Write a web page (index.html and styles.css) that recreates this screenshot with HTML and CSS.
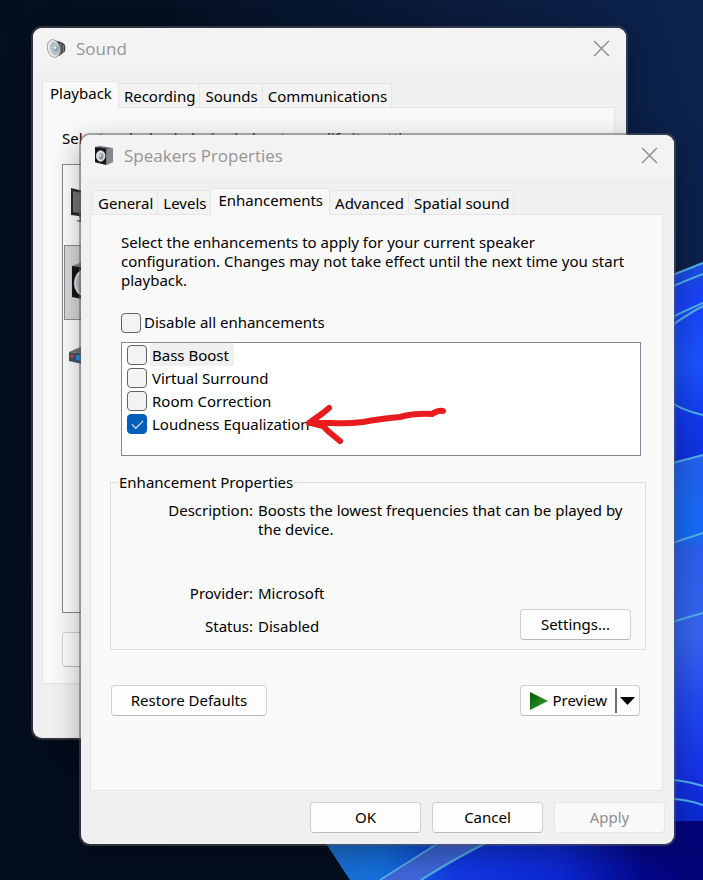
FILE: index.html
```html
<!DOCTYPE html>
<html lang="en">
<head>
  <meta charset="UTF-8" />
  <meta name="viewport" content="width=device-width,initial-scale=1.0"/>
  <title>Speakers Properties</title>
  <link rel="stylesheet" href="styles.css">
</head>
<body>
  <div class="desktop">
    <svg class="wallpaper" viewBox="0 0 703 880" preserveAspectRatio="xMaxYMax slice" aria-hidden="true">
      <defs>
        <linearGradient id="petal" x1="0" y1="264" x2="0" y2="464" gradientUnits="userSpaceOnUse">
          <stop offset="0" stop-color="#1c50dc"/>
          <stop offset="0.15" stop-color="#1840f4"/>
          <stop offset="0.5" stop-color="#1a52fb"/>
          <stop offset="0.8" stop-color="#1038ea"/>
          <stop offset="1" stop-color="#0e30d8"/>
        </linearGradient>
        <linearGradient id="lower" x1="0" y1="460" x2="0" y2="822" gradientUnits="userSpaceOnUse">
          <stop offset="0" stop-color="#2260ee"/>
          <stop offset="0.2" stop-color="#146cf6"/>
          <stop offset="0.25" stop-color="#2c5eea"/>
          <stop offset="0.48" stop-color="#3565ee"/>
          <stop offset="0.7" stop-color="#1e44ee"/>
          <stop offset="0.88" stop-color="#1430e4"/>
          <stop offset="1" stop-color="#0a2ad0"/>
        </linearGradient>
        <linearGradient id="base" x1="325" y1="0" x2="703" y2="0" gradientUnits="userSpaceOnUse">
          <stop offset="0" stop-color="#1f70d4"/>
          <stop offset="0.15" stop-color="#1270dc"/>
          <stop offset="0.35" stop-color="#1238e4"/>
          <stop offset="0.62" stop-color="#0c28d4"/>
          <stop offset="0.85" stop-color="#03078a"/>
          <stop offset="1" stop-color="#020470"/>
        </linearGradient>
      </defs>
      <path d="M660 280 L703 263 V470 H660 Z" fill="url(#petal)"/>
      <path d="M660 466 L703 455 V822 H660 Z" fill="url(#lower)"/>
      <path d="M660 821 H703 V860 H640 Z" fill="#03067c"/>
      <path d="M325 842 H703 V880 H350 Q338 862 325 842 Z" fill="url(#base)"/>
      <path d="M380 880 L440 842 H488 L421 880 Z" fill="#3f66d8"/>
      <g fill="none" stroke="#52b0e8" stroke-width="2">
        <path d="M380 880 L440 842 M421 880 Q452 860 488 842"/>
        <path d="M660 280 L703 263 M660 292 Q685 281 703 274 M660 323 Q685 311 703 303 M660 335 Q680 318 703 306"/>
        <path d="M660 396 Q680 410 703 415 M660 466 Q685 460 703 455 M660 547 Q685 539 703 533"/>
        <path d="M660 626 Q685 618 703 613 M660 779 Q685 780 703 786 M660 798 Q688 799 703 805"/>
      </g>
    </svg>

    <section class="window window-back" aria-label="Sound">
      <header class="titlebar">
        <svg class="app-icon" viewBox="0 0 20 20" aria-hidden="true">
          <path d="M7 1 L14 3 L18 5 Q20 8 19 13 L14 17 L8 19 Z" fill="#444"/>
          <path d="M14 5 Q16 10 14 16 M17 6 Q18 10 17 14" fill="none" stroke="#8a8a8a"/>
          <ellipse cx="7" cy="10" rx="6.5" ry="9.5" fill="#eeeeee" stroke="#8c8c8c" stroke-width="0.8" transform="rotate(-14 7 10)"/>
          <ellipse cx="8" cy="10" rx="4.8" ry="7.5" fill="#b4c0c8" transform="rotate(-14 8 10)"/>
          <ellipse cx="9.5" cy="10" rx="2.5" ry="3" fill="#8fa3b0"/>
          <circle cx="8.5" cy="9" r="1.5" fill="#e8f0f4"/>
        </svg>
        <h2>Sound</h2>
        <button class="close" type="button" aria-label="Close Sound">
          <svg viewBox="0 0 16 16"><path d="M1 1 L15 15 M15 1 L1 15"/></svg>
        </button>
      </header>
      <div class="window-body">
        <div class="tabs" role="tablist">
          <button class="tab active" type="button" role="tab" aria-selected="true">Playback</button>
          <button class="tab" type="button" role="tab">Recording</button>
          <button class="tab" type="button" role="tab">Sounds</button>
          <button class="tab" type="button" role="tab">Communications</button>
        </div>
        <div class="panel playback">
          <p>Select a playback device below to modify its settings:</p>
          <ul class="devices">
            <li>
              <svg viewBox="0 0 48 48" aria-hidden="true">
                <path d="M2 4 L42 14 V36 L2 31 Z" fill="#2b2b2b"/>
                <path d="M4 7 L40 16 V33 L4 28 Z" fill="#747474"/>
                <path d="M10 32 L18 33 V37 H12 Z" fill="#555"/>
                <path d="M7 37 Q14 34 26 37 L22 40 Z" fill="#444"/>
              </svg>
            </li>
            <li class="selected">
              <svg viewBox="0 0 48 48" aria-hidden="true">
                <path d="M2 7 L12 3 L38 6 V10 Z" fill="#85888c"/>
                <path d="M2 7 L32 10 V44 L2 38 Z" fill="#171717"/>
                <ellipse cx="14" cy="24" rx="9" ry="12" fill="#b9bdc0" stroke="#eee" stroke-width="2"/>
              </svg>
            </li>
            <li>
              <svg viewBox="0 0 48 48" aria-hidden="true">
                <path d="M0 18 L16 11 L44 15 L40 22 Z" fill="#6d7880"/>
                <path d="M0 18 L40 22 V36 L0 27 Z" fill="#46535e"/>
                <path d="M7 21 L24 23 V28 L7 26 Z" fill="#2b91e8"/>
                <circle cx="3" cy="22" r="1.5" fill="#e04a3c"/>
              </svg>
            </li>
          </ul>
          <button class="btn" type="button" aria-label="Configure"></button>
        </div>
      </div>
    </section>

    <section class="window window-front" aria-label="Speakers Properties">
      <header class="titlebar">
        <svg class="app-icon" viewBox="0 0 20 20" aria-hidden="true">
          <path d="M0 1 L5 0 L19 2 L13 4 Z" fill="#686a70"/>
          <path d="M12 3 L19 2 V17 L12 20 Z" fill="#858892"/>
          <path d="M0 1 L12 3 V20 L0 17 Z" fill="#161616"/>
          <ellipse cx="6" cy="10.5" rx="4.5" ry="5.5" fill="#d8dcde" stroke="#f4f4f4" stroke-width="0.8"/>
          <ellipse cx="6.5" cy="11" rx="2.5" ry="3.5" fill="#8c9aa4"/>
          <circle cx="5.5" cy="10" r="1" fill="#f4f8fa"/>
        </svg>
        <h2>Speakers Properties</h2>
        <button class="close" type="button" aria-label="Close Speakers Properties">
          <svg viewBox="0 0 16 16"><path d="M1 1 L15 15 M15 1 L1 15"/></svg>
        </button>
      </header>
      <div class="window-body">
        <div class="tabs tabs-inset" role="tablist">
          <button class="tab" type="button" role="tab">General</button>
          <button class="tab" type="button" role="tab">Levels</button>
          <button class="tab active" type="button" role="tab" aria-selected="true">Enhancements</button>
          <button class="tab" type="button" role="tab">Advanced</button>
          <button class="tab" type="button" role="tab">Spatial sound</button>
        </div>
        <div class="panel enhancements">
          <p>Select the enhancements to apply for your current speaker configuration. Changes may not take effect until the next time you start playback.</p>
          <label class="check disable-all"><input type="checkbox"><span>Disable all enhancements</span></label>
          <div class="effects">
            <label class="check focused"><input type="checkbox"><span>Bass Boost</span></label>
            <label class="check"><input type="checkbox"><span>Virtual Surround</span></label>
            <label class="check"><input type="checkbox"><span>Room Correction</span></label>
            <label class="check"><input type="checkbox" checked><span>Loudness Equalization</span></label>
            <svg class="arrow" viewBox="0 0 144 44" aria-hidden="true">
              <path d="M140 10 Q135 9 129 13 Q112 12 97 16 Q76 18 60 21 Q44 23 28 22 L6 22 L20 12 L26 7 M8 22 L20 25 L26 31 L37 40"/>
            </svg>
          </div>
          <fieldset class="properties">
            <legend>Enhancement Properties</legend>
            <dl>
              <dt>Description:</dt>
              <dd class="description">Boosts the lowest frequencies that can be played by the device.</dd>
              <dt>Provider:</dt>
              <dd>Microsoft</dd>
              <dt>Status:</dt>
              <dd>Disabled</dd>
            </dl>
            <button class="btn settings" type="button">Settings...</button>
          </fieldset>
          <div class="actions">
            <button class="btn restore" type="button">Restore Defaults</button>
            <div class="split">
              <button class="preview" type="button">
                <svg viewBox="0 0 18 18" aria-hidden="true">
                  <defs>
                    <linearGradient id="play" x1="0" y1="0" x2="1" y2="1">
                      <stop offset="0" stop-color="#005c00"/>
                      <stop offset="1" stop-color="#3aa03a"/>
                    </linearGradient>
                  </defs>
                  <path d="M0 0 L18 9 L0 18 Z" fill="url(#play)"/>
                </svg>
                Preview
              </button>
              <button class="more" type="button" aria-label="Preview options">
                <svg viewBox="0 0 15 8"><path d="M0 0 H15 L7.5 8 Z"/></svg>
              </button>
            </div>
          </div>
        </div>
        <footer class="dialog-buttons">
          <button class="btn" type="button">OK</button>
          <button class="btn" type="button">Cancel</button>
          <button class="btn" type="button" disabled>Apply</button>
        </footer>
      </div>
    </section>
  </div>
</body>
</html>
```

FILE: styles.css
```css
* {
  box-sizing: border-box;
}
body {
  margin: 0;
  font-family: "Noto Sans", "Open Sans", sans-serif;
  font-size: 15px;
  line-height: 19px;
  color: #000;
}
button {
  font: inherit;
  color: inherit;
}
h2, p, ul, dl, dd {
  margin: 0;
  padding: 0;
}
.desktop {
  position: relative;
  min-height: 100vh;
  overflow: hidden;
  background: linear-gradient(75deg, #030e1e 0%, #040f20 40%, #0a1b3c 75%, #0d2450 100%);
}
.wallpaper {
  position: absolute;
  width: 100%;
  height: 100%;
}

/* windows */
.window {
  position: absolute;
  border-radius: 9px;
  background: #f0f0f0;
  box-shadow: 0 0 0 2px rgba(90, 90, 94, 0.5), 0 10px 28px 2px rgba(0, 0, 0, 0.3);
}
.window-back {
  top: 28px;
  left: 33px;
  right: 77px;
  padding-bottom: 54px;
}
.window-front {
  top: 135px;
  left: 81px;
  right: 29px;
  padding-bottom: 11px;
}
.titlebar {
  display: flex;
  align-items: center;
  gap: 10px;
  height: 43px;
  padding: 0 16px 2px 14px;
  border-radius: 9px 9px 0 0;
  background: #f3f3f3;
}
.titlebar h2 {
  flex: 1;
  font-family: "Open Sans", sans-serif;
  font-size: 17px;
  font-weight: normal;
  color: #959595;
}
.app-icon {
  width: 19px;
  height: 21px;
}
.close {
  display: flex;
  padding: 0;
  border: 0;
  background: none;
}
.close svg {
  width: 17px;
  height: 17px;
  fill: none;
  stroke: #8d8d8d;
  stroke-width: 1.3;
}
.window-body {
  padding: 10px 11px 0 9px;
}

/* tabs */
.tabs {
  display: flex;
  align-items: flex-end;
}
.tabs-inset {
  padding-left: 2px;
}
.tab {
  height: 24px;
  padding: 1px 4px 0 5px;
  border: 1px solid #e5e5e5;
  border-left-width: 0;
  border-bottom: 0;
  background: #f3f3f3;
  white-space: nowrap;
}
.tab:first-child {
  border-left-width: 1px;
}
.tab.active {
  height: 27px;
  margin-bottom: -1px;
  padding: 0 6px 3px 7px;
  background: #f9f9f9;
  z-index: 1;
}
.panel {
  border: 1px solid #e5e5e5;
  background: #f9f9f9;
}

/* playback list */
.playback {
  padding: 21px 19px 16px;
}
.devices {
  height: 449px;
  margin: 16px 0 19px;
  border: 1px solid #828790;
  background: #fff;
  list-style: none;
}
.devices li {
  display: flex;
  align-items: center;
  height: 75px;
  margin: 0 1px;
  padding-left: 5px;
}
.devices li:first-child {
  margin-top: 5px;
}
.devices .selected {
  border: 1px solid #8c8c8c;
  background: #d9d9d9;
}
.devices svg {
  width: 48px;
  height: 48px;
}

/* enhancements */
.enhancements {
  padding: 18px 16px 74px 19px;
}
.enhancements p {
  padding: 0 11px;
}
.check {
  display: flex;
  align-items: center;
  gap: 3px;
  height: 23px;
}
.check input {
  appearance: none;
  flex: none;
  width: 20px;
  height: 20px;
  margin: 0;
  border: 1px solid #626262;
  border-radius: 4px;
  background: #f3f3f3;
}
.check input:checked {
  border-color: #005fb8;
  background: #005fb8;
}
.check input:checked::before {
  content: "";
  display: block;
  width: 10px;
  height: 5px;
  margin: 5px 0 0 4px;
  border: solid #fff;
  border-width: 0 0 1px 1px;
  transform: rotate(-45deg);
}
.check span {
  padding: 2px;
}
.disable-all {
  margin: 21px 11px 8px;
}
.disable-all span {
  padding: 0;
}
.effects {
  position: relative;
  height: 114px;
  margin: 0 5px 0 11px;
  padding: 0 5px;
  border: 1px solid #828790;
  background: #fff;
}
.effects span {
  padding-top: 3px;
  padding-bottom: 1px;
}
.focused span {
  padding-right: 5px;
  background: #f0f0f0;
}
.arrow {
  position: absolute;
  top: 58px;
  left: 181px;
  width: 144px;
  height: 44px;
  fill: none;
  stroke: #e81c1f;
  stroke-width: 6;
  stroke-linecap: round;
  stroke-linejoin: round;
}
.properties {
  position: relative;
  margin: 17px 0 35px;
  padding: 9px 14px 13px 7px;
  border: 1px solid #dcdcdc;
}
.properties legend {
  padding: 0 1px;
}
.properties dl {
  display: grid;
  grid-template-columns: 135px 1fr;
  column-gap: 5px;
  row-gap: 14px;
}
.properties dt {
  text-align: right;
}
.description {
  min-height: 69px;
}
.settings {
  position: absolute;
  right: 14px;
  bottom: 9px;
}
.actions {
  display: flex;
  justify-content: space-between;
  padding: 0 6px 0 1px;
}

/* buttons */
.btn, .split {
  height: 31px;
  border: 1px solid #d0d0d0;
  border-bottom-color: #bababa;
  border-radius: 4px;
  background: #fdfdfd;
}
.btn {
  width: 111px;
  padding: 0;
}
.btn:disabled {
  border-color: #e6e6e6;
  background: #f9f9f9;
  color: #8f8f8f;
}
.playback .btn {
  display: block;
  height: 35px;
}
.enhancements .restore {
  width: 156px;
}
.split {
  display: flex;
  align-items: center;
}
.split button {
  display: flex;
  align-items: center;
  padding: 0;
  border: 0;
  background: none;
}
.split .preview {
  gap: 4px;
  padding: 0 8px 0 9px;
}
.preview svg {
  width: 18px;
  height: 18px;
}
.split .more {
  height: 25px;
  padding: 0 4px 0 3px;
  border-left: 2px solid #6e6e6e;
}
.more svg {
  width: 15px;
  height: 8px;
}
.dialog-buttons {
  display: flex;
  justify-content: flex-end;
  gap: 11px;
  margin: 11px -2px 0 0;
}
```
